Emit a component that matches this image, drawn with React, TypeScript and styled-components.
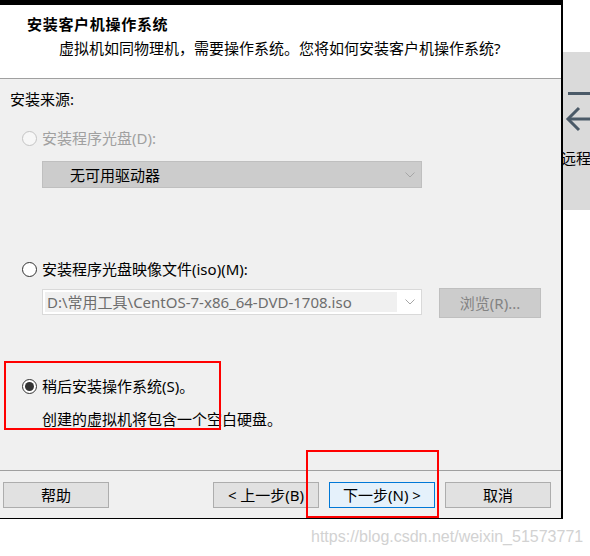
import React from "react";
import styled, { createGlobalStyle, css } from "styled-components";

const GlobalStyle = createGlobalStyle`
  html, body { margin: 0; padding: 0; background: #fff; }
  body {
    font-family: "Noto Sans", "Noto Sans CJK SC", sans-serif;
    font-size: 15px;
    color: #000;
  }
`;

const Page = styled.div`
  position: relative;
  width: 590px;
  height: 556px;
  overflow: hidden;
`;

const Screen = styled.div`
  display: flex;
  align-items: flex-start;
`;

const Dialog = styled.div`
  width: 561px;
  flex: none;
  border-top: 5px solid #000;
  border-right: 2px solid #000;
  border-bottom: 1px solid #000;
  display: flex;
  flex-direction: column;
`;

const Header = styled.div`
  height: 64px;
  padding-top: 9px;
  background: #fff;
  border-bottom: 1px solid #a0a0a0;
`;

const Title = styled.div`
  padding-left: 27px;
  font-weight: 700;
  letter-spacing: 0.7px;
  line-height: 20px;
  height: 20px;
`;

const Subtitle = styled.div`
  margin-top: 4px;
  padding-left: 59px;
  line-height: 20px;
  height: 20px;
`;

const Body = styled.div`
  height: 381px;
  padding-top: 10px;
  background: #f0f0f0;
  border-bottom: 1px solid #a0a0a0;
  display: flex;
  flex-direction: column;
`;

const SectionLabel = styled.div`
  padding-left: 10px;
  line-height: 20px;
  height: 20px;
`;

const OptionRow = styled.div<{ $top: number; $disabled?: boolean }>`
  margin-top: ${(p) => p.$top}px;
  margin-left: 22px;
  height: 20px;
  display: flex;
  align-items: center;
  gap: 5px;
  line-height: 20px;
  color: ${(p) => (p.$disabled ? "#a0a0a0" : "#000")};
`;

const Radio = styled.span<{ $checked?: boolean; $disabled?: boolean }>`
  box-sizing: border-box;
  width: 15px;
  height: 15px;
  flex: none;
  border-radius: 50%;
  border: 1px solid ${(p) => (p.$disabled ? "#c4c4c4" : "#333")};
  background: ${(p) => (p.$disabled ? "#f7f7f7" : "#fff")};
  display: flex;
  align-items: center;
  justify-content: center;
  ${(p) =>
    p.$checked &&
    css`
      &::after {
        content: "";
        width: 9px;
        height: 9px;
        border-radius: 50%;
        background: #333;
      }
    `}
`;

const Chevron = () => (
  <svg width="10" height="6" viewBox="0 0 10 6">
    <polyline points="0.5,0.5 5,5 9.5,0.5" fill="none" stroke="#a6a6a6" strokeWidth="1" />
  </svg>
);

const DisabledSelect = styled.div`
  box-sizing: border-box;
  margin-top: 13px;
  margin-left: 42px;
  width: 380px;
  height: 27px;
  border: 1px solid #bfbfbf;
  background: #cccccc;
  display: flex;
  align-items: center;
  justify-content: space-between;
  padding: 0 6px 0 27px;
  line-height: 20px;
`;

const ComboRow = styled.div`
  margin-top: 9px;
  margin-left: 42px;
  display: flex;
  align-items: flex-start;
  gap: 17px;
`;

const Combo = styled.div`
  box-sizing: border-box;
  margin-top: 1px;
  width: 380px;
  height: 26px;
  border: 1px solid #d9d9d9;
  background: #fff;
  display: flex;
  align-items: center;
  padding: 2px 6px 2px 2px;
  gap: 8px;
`;

const ComboField = styled.div`
  flex: 1;
  height: 20px;
  background: #f0f0f0;
  color: #6d6d6d;
  padding-left: 2px;
  line-height: 20px;
  white-space: nowrap;
  overflow: hidden;
`;

const BrowseButton = styled.div`
  box-sizing: border-box;
  width: 102px;
  height: 30px;
  border: 1px solid #bfbfbf;
  background: #cccccc;
  color: #838383;
  display: flex;
  align-items: center;
  justify-content: center;
  line-height: 20px;
`;

const Description = styled.div`
  margin-top: 13px;
  margin-left: 42px;
  line-height: 20px;
  height: 20px;
`;

const Footer = styled.div`
  height: 26px;
  padding: 11px 10px 10px 3px;
  background: #f0f0f0;
  display: flex;
  justify-content: space-between;
`;

const ButtonGroup = styled.div`
  display: flex;
  gap: 10px;
`;

const Button = styled.div<{ $primary?: boolean }>`
  box-sizing: border-box;
  width: 106px;
  height: 26px;
  border: 1px solid ${(p) => (p.$primary ? "#0078d7" : "#adadad")};
  background: ${(p) => (p.$primary ? "#e5f1fb" : "#e1e1e1")};
  display: flex;
  align-items: center;
  justify-content: center;
  line-height: 20px;
  white-space: pre;
`;

const SidePanel = styled.div`
  margin-top: 52px;
  width: 27px;
  height: 158px;
  flex: none;
  background: #dadada;
  overflow: hidden;
  display: flex;
  flex-direction: column;
`;

const SideIcon = styled.svg`
  margin-top: 38px;
  display: block;
  flex: none;
`;

const SideText = styled.div`
  margin-top: 14px;
  margin-left: -2px;
  white-space: nowrap;
  line-height: 20px;
`;

const Watermark = styled.div`
  margin-top: 8px;
  margin-left: 311px;
  font-family: "Liberation Sans", Arial, sans-serif;
  font-size: 16px;
  line-height: 20px;
  color: #d2d2d2;
  white-space: nowrap;
`;

const Highlight = styled.div<{ $x: number; $y: number; $w: number; $h: number }>`
  position: absolute;
  box-sizing: border-box;
  left: ${(p) => p.$x}px;
  top: ${(p) => p.$y}px;
  width: ${(p) => p.$w}px;
  height: ${(p) => p.$h}px;
  border: 2px solid #ff0000;
  pointer-events: none;
`;

export default function App() {
  return (
    <Page>
      <GlobalStyle />
      <Screen>
        <Dialog>
          <Header>
            <Title>安装客户机操作系统</Title>
            <Subtitle>虚拟机如同物理机，需要操作系统。您将如何安装客户机操作系统?</Subtitle>
          </Header>
          <Body>
            <SectionLabel>安装来源:</SectionLabel>
            <OptionRow $top={19} $disabled>
              <Radio $disabled />
              <span>安装程序光盘(D):</span>
            </OptionRow>
            <DisabledSelect>
              <span>无可用驱动器</span>
              <Chevron />
            </DisabledSelect>
            <OptionRow $top={71}>
              <Radio />
              <span>安装程序光盘映像文件(iso)(M):</span>
            </OptionRow>
            <ComboRow>
              <Combo>
                <ComboField>D:\常用工具\CentOS-7-x86_64-DVD-1708.iso</ComboField>
                <Chevron />
              </Combo>
              <BrowseButton>浏览(R)...</BrowseButton>
            </ComboRow>
            <OptionRow $top={58}>
              <Radio $checked />
              <span>稍后安装操作系统(S)。</span>
            </OptionRow>
            <Description>创建的虚拟机将包含一个空白硬盘。</Description>
          </Body>
          <Footer>
            <Button>帮助</Button>
            <ButtonGroup>
              <Button>{"< 上一步(B)"}</Button>
              <Button $primary>{"下一步(N) >"}</Button>
              <Button>取消</Button>
            </ButtonGroup>
          </Footer>
        </Dialog>
        <SidePanel>
          <SideIcon width="27" height="44" viewBox="0 0 27 44">
            <rect x="5" y="2" width="22" height="3" fill="#4b5a68" />
            <line x1="5" y1="29" x2="27" y2="29" stroke="#4b5a68" strokeWidth="3" />
            <polyline points="16,18 5,29 16,40" fill="none" stroke="#4b5a68" strokeWidth="3" />
          </SideIcon>
          <SideText>远程</SideText>
        </SidePanel>
      </Screen>
      <Watermark>https://blog.csdn.net/weixin_51573771</Watermark>
      <Highlight $x={4} $y={361} $w={217} $h={69} />
      <Highlight $x={306} $y={450} $w={133} $h={68} />
    </Page>
  );
}
